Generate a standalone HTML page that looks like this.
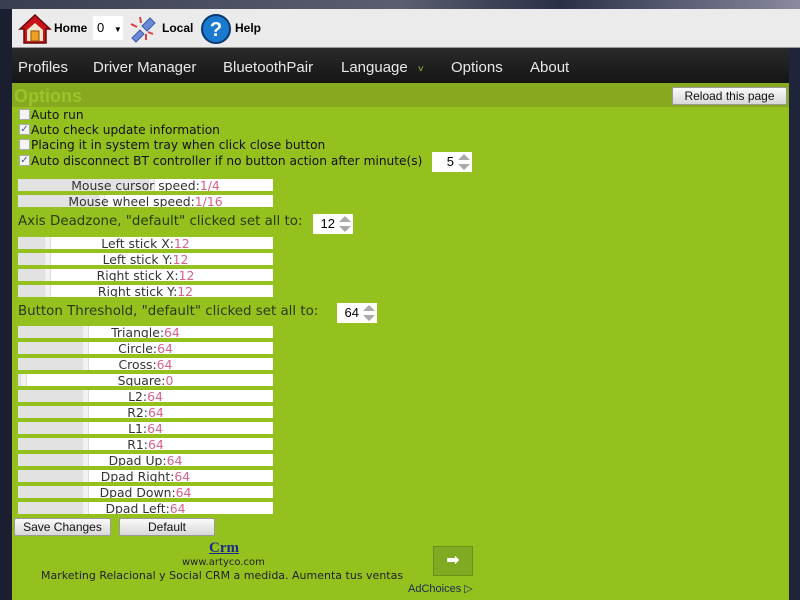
<!DOCTYPE html>
<html><head><meta charset="utf-8"><style>
*{margin:0;padding:0;box-sizing:border-box}
body{width:800px;height:600px;overflow:hidden;background:#1c2236;font-family:"Liberation Sans","DejaVu Sans",sans-serif;position:relative}
.a{position:absolute}
#top{left:0;top:0;width:800px;height:9px;background:linear-gradient(90deg,#3a3f50,#5a5e6e 50%,#2a3048 70%,#8a8aa0)}
#tb{left:12px;top:9px;width:788px;height:39px;background:#ebebeb;border-bottom:1px solid #999}
#menu{left:12px;top:48px;width:777px;height:35px;background:linear-gradient(#2a2a2a,#151515);color:#e8e8e8;font-size:15px}
#menu span{position:absolute;top:11px}
#green{left:12px;top:83px;width:777px;height:517px;background:#95c11f}
#hdr{left:12px;top:83px;width:777px;height:24px;background:#86a91f}
#rb{left:789px;top:48px;width:11px;height:552px;background:#20243a}
.t{font-family:"DejaVu Sans",sans-serif;font-size:12.2px;color:#111;white-space:nowrap}
.cb{width:11px;height:11px;background:#f4f4f4;border:1px solid #aaa;font-size:10px;line-height:9px;color:#3a5ab0;text-align:center}
.bar{left:18px;width:255px;height:12px;background:#fff;font-family:"DejaVu Sans",sans-serif;font-size:12.4px;line-height:14px;color:#333;text-align:center;overflow:hidden}
.bar i{position:absolute;left:0;top:0;height:12px;background:#e2e2e2}
.bar b{position:absolute;top:0;width:7px;height:12px;background:#f2f2f2;border-left:1px solid #ddd;border-right:1px solid #ddd}
.bar span{position:relative}
.v{color:#d8608a}
.spin{height:20px;background:#fff;font-size:13px;line-height:20px;text-align:right;padding-right:18px}
.spin svg{position:absolute;right:1px;top:1px}
.btn{height:18px;background:linear-gradient(#fafafa,#d8d8d8);border:1px solid #999;border-radius:2px;font-size:12px;color:#111;text-align:center;line-height:16px}
.lbl{font-family:"DejaVu Sans",sans-serif;font-size:13.4px;color:#2a3a10;white-space:nowrap}
</style></head><body>
<div class="a" id="top"></div>
<div class="a" id="tb"></div>
<div class="a" style="left:0;top:9px;width:12px;height:591px;background:#1a1e30"></div>
<svg class="a" style="left:18px;top:12px" width="34" height="34" viewBox="0 0 34 34"><path d="M2 17 L17 3 L32 17 L28 17 L28 31 L6 31 L6 17Z" fill="#c8141a" stroke="#6a0808" stroke-width="1.5"/><path d="M9 18 L17 11 L25 18 L25 29 L9 29Z" fill="#f4e8d0"/><rect x="13" y="19" width="8" height="10" fill="#f0a020" stroke="#905010"/></svg>
<div class="a" style="left:54px;top:21px;font-weight:bold;font-size:12px">Home</div>
<div class="a" style="left:93px;top:16px;width:30px;height:24px;background:#fff;font-size:13px;padding:4px 0 0 4px">0 <span style="font-size:8px;margin-left:6px">▼</span></div>
<svg class="a" style="left:128px;top:14px" width="30" height="30" viewBox="0 0 30 30"><path d="M4 24 L12 16 L16 20 L8 28Z M14 12 L22 4 L27 9 L19 17Z" fill="#6a8ad8" stroke="#3a5aa8"/><path d="M3 10 L9 13 M12 3 L13 9 M18 26 L18 20 M25 20 L20 18" stroke="#e04040" stroke-width="2"/></svg>
<div class="a" style="left:162px;top:21px;font-weight:bold;font-size:12px">Local</div>
<svg class="a" style="left:200px;top:13px" width="32" height="32"><circle cx="16" cy="16" r="14" fill="#1a7ad0" stroke="#0a3a70" stroke-width="2"/><text x="16" y="23" text-anchor="middle" font-family="Liberation Sans" font-weight="bold" font-size="20" fill="#fff">?</text></svg>
<div class="a" style="left:235px;top:21px;font-weight:bold;font-size:12px">Help</div>
<div class="a" id="menu"><span style="left:6px">Profiles</span><span style="left:81px">Driver Manager</span><span style="left:211px">BluetoothPair</span><span style="left:329px">Language <span style="color:#9c3;font-size:10px;position:static;margin-left:6px">˅</span></span><span style="left:439px">Options</span><span style="left:518px">About</span></div>
<div class="a" id="rb"></div>
<div class="a" id="green"></div>
<div class="a" id="hdr"></div>
<div class="a" style="left:14px;top:86px;font-size:18px;font-weight:bold;color:#9cc428">Options</div>
<div class="a btn" style="left:672px;top:87px;width:115px;height:18px;font-size:12px">Reload this page</div>
<div class="a cb" style="left:19px;top:109px"></div><div class="a t" style="left:31px;top:108px">Auto run</div>
<div class="a cb" style="left:19px;top:124px">✓</div><div class="a t" style="left:31px;top:123px">Auto check update information</div>
<div class="a cb" style="left:19px;top:139px"></div><div class="a t" style="left:31px;top:138px">Placing it in system tray when click close button</div>
<div class="a cb" style="left:19px;top:155px">✓</div><div class="a t" style="left:31px;top:154px">Auto disconnect BT controller if no button action after minute(s)</div>
<div class="a spin" style="left:432px;top:152px;width:40px">5<svg width="14" height="18"><path d="M7 1 L13 7 L1 7Z M1 11 L13 11 L7 17Z" fill="#aaa"/></svg></div>

<div class="a bar" style="top:179px"><i style="width:130px"></i><b style="left:130px"></b><span>Mouse cursor speed:<span class="v">1/4</span></span></div>
<div class="a bar" style="top:195px"><i style="width:80px"></i><b style="left:80px"></b><span>Mouse wheel speed:<span class="v">1/16</span></span></div>
<div class="a lbl" style="left:18px;top:214px">Axis Deadzone, "default" clicked set all to:</div>
<div class="a spin" style="left:313px;top:214px;width:40px">12<svg width="14" height="18"><path d="M7 1 L13 7 L1 7Z M1 11 L13 11 L7 17Z" fill="#aaa"/></svg></div>
<div class="a bar" style="top:237px"><i style="width:26px"></i><b style="left:26px"></b><span>Left stick X:<span class="v">12</span></span></div>
<div class="a bar" style="top:253px"><i style="width:26px"></i><b style="left:26px"></b><span>Left stick Y:<span class="v">12</span></span></div>
<div class="a bar" style="top:269px"><i style="width:26px"></i><b style="left:26px"></b><span>Right stick X:<span class="v">12</span></span></div>
<div class="a bar" style="top:285px"><i style="width:26px"></i><b style="left:26px"></b><span>Right stick Y:<span class="v">12</span></span></div>
<div class="a lbl" style="left:18px;top:304px">Button Threshold, "default" clicked set all to:</div>
<div class="a spin" style="left:337px;top:303px;width:40px">64<svg width="14" height="18"><path d="M7 1 L13 7 L1 7Z M1 11 L13 11 L7 17Z" fill="#aaa"/></svg></div>
<div class="a bar" style="top:326px"><i style="width:64px"></i><b style="left:64px"></b><span>Triangle:<span class="v">64</span></span></div>
<div class="a bar" style="top:342px"><i style="width:64px"></i><b style="left:64px"></b><span>Circle:<span class="v">64</span></span></div>
<div class="a bar" style="top:358px"><i style="width:64px"></i><b style="left:64px"></b><span>Cross:<span class="v">64</span></span></div>
<div class="a bar" style="top:374px"><i style="width:2px"></i><b style="left:2px"></b><span>Square:<span class="v">0</span></span></div>
<div class="a bar" style="top:390px"><i style="width:64px"></i><b style="left:64px"></b><span>L2:<span class="v">64</span></span></div>
<div class="a bar" style="top:406px"><i style="width:64px"></i><b style="left:64px"></b><span>R2:<span class="v">64</span></span></div>
<div class="a bar" style="top:422px"><i style="width:64px"></i><b style="left:64px"></b><span>L1:<span class="v">64</span></span></div>
<div class="a bar" style="top:438px"><i style="width:64px"></i><b style="left:64px"></b><span>R1:<span class="v">64</span></span></div>
<div class="a bar" style="top:454px"><i style="width:64px"></i><b style="left:64px"></b><span>Dpad Up:<span class="v">64</span></span></div>
<div class="a bar" style="top:470px"><i style="width:64px"></i><b style="left:64px"></b><span>Dpad Right:<span class="v">64</span></span></div>
<div class="a bar" style="top:486px"><i style="width:64px"></i><b style="left:64px"></b><span>Dpad Down:<span class="v">64</span></span></div>
<div class="a bar" style="top:502px"><i style="width:64px"></i><b style="left:64px"></b><span>Dpad Left:<span class="v">64</span></span></div>
<div class="a btn" style="left:14px;top:518px;width:97px">Save Changes</div>
<div class="a btn" style="left:119px;top:518px;width:96px">Default</div>
<div class="a" style="left:209px;top:540px;font-family:'Liberation Serif',serif;font-weight:bold;font-size:15px;color:#1a2a8a;text-decoration:underline">Crm</div>
<div class="a" style="left:182px;top:557px;font-size:10px;color:#222;font-family:'DejaVu Sans',sans-serif">www.artyco.com</div>
<div class="a" style="left:41px;top:569px;font-size:11px;color:#222;font-family:'DejaVu Sans',sans-serif;white-space:nowrap">Marketing Relacional y Social CRM a medida. Aumenta tus ventas</div>
<div class="a" style="left:433px;top:546px;width:40px;height:30px;background:#7faa22;border:1px solid #6a9018;color:#fff;text-align:center;font-size:16px;line-height:28px;font-weight:bold">➡</div>
<div class="a" style="left:408px;top:582px;font-size:11px;color:#1a2a50">AdChoices ▷</div>
</body></html>
